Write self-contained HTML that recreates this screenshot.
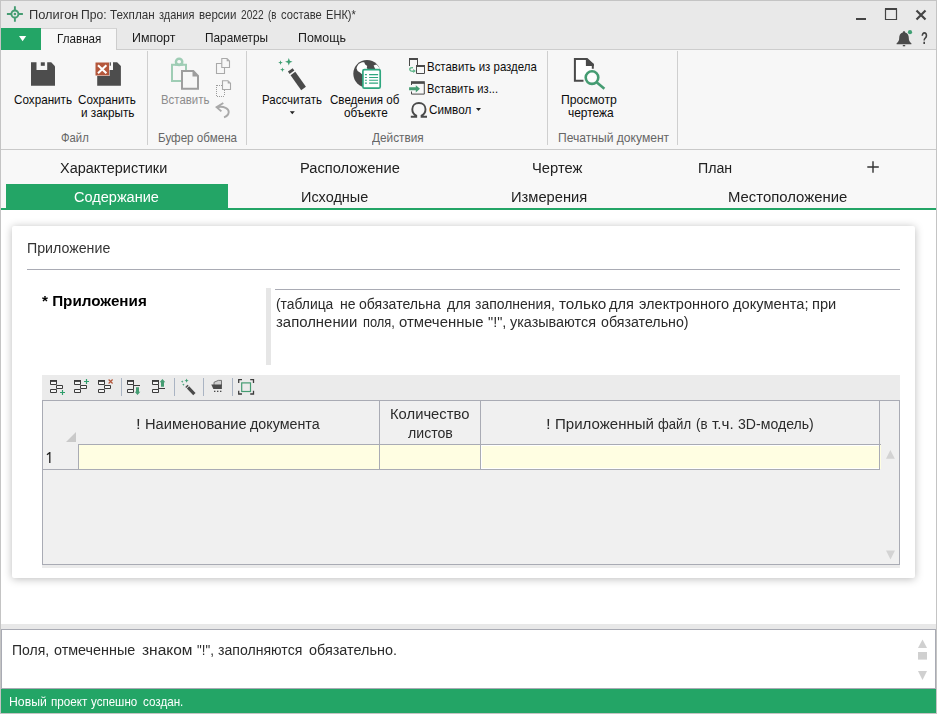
<!DOCTYPE html>
<html lang="ru"><head><meta charset="utf-8"><title>Полигон Про</title>
<style>
html,body{margin:0;padding:0;}
body{width:937px;height:714px;overflow:hidden;background:#fff;font-family:"Liberation Sans",sans-serif;position:relative;}
.b{position:absolute;box-sizing:border-box;}
.t{position:absolute;white-space:nowrap;transform-origin:0 0;display:block;}
svg{position:absolute;overflow:visible;}
.gs{position:absolute;left:0;top:0;width:937px;height:714px;will-change:transform;}
</style></head><body>
<!-- window frame -->
<div class="b" style="left:0;top:0;width:937px;height:714px;background:#c4c4c4;"></div>
<!-- title + tab strip -->
<div class="b" style="left:1px;top:1px;width:935px;height:48px;background:#e9e9e9;"></div>
<!-- ribbon body -->
<div class="b" style="left:1px;top:49px;width:935px;height:101px;background:#f7f7f7;border-top:1px solid #cdcdcd;border-bottom:1px solid #c9c9c9;"></div>
<!-- app button -->
<div class="b" style="left:1px;top:28px;width:40px;height:22px;background:#23a566;"></div>
<!-- active ribbon tab -->
<div class="b" style="left:41px;top:28px;width:76px;height:22px;background:#f7f7f7;border-top:1px solid #d4d4d4;border-right:1px solid #cdcdcd;"></div>
<!-- ribbon separators -->
<div class="b" style="left:147px;top:51px;width:1px;height:94px;background:#cfcfcf;"></div>
<div class="b" style="left:246px;top:51px;width:1px;height:94px;background:#cfcfcf;"></div>
<div class="b" style="left:547px;top:51px;width:1px;height:94px;background:#cfcfcf;"></div>
<div class="b" style="left:677px;top:51px;width:1px;height:94px;background:#cfcfcf;"></div>
<!-- section tabs area -->
<div class="b" style="left:1px;top:150px;width:935px;height:58px;background:#f8f8f8;"></div>
<div class="b" style="left:6px;top:184px;width:222px;height:24px;background:#23a566;"></div>
<div class="b" style="left:1px;top:208px;width:935px;height:2px;background:#23a566;"></div>
<!-- content area -->
<div class="b" style="left:1px;top:210px;width:935px;height:414px;background:#fff;"></div>
<!-- card -->
<div class="b" style="left:12px;top:226px;width:903px;height:352px;background:#fff;border-radius:2px;box-shadow:0 1px 8px rgba(0,0,0,0.27);"></div>
<div class="b" style="left:27px;top:269px;width:873px;height:1px;background:#a9abb4;"></div>
<!-- splitter + description -->
<div class="b" style="left:266px;top:288px;width:5px;height:77px;background:#e6e6e6;"></div>
<div class="b" style="left:275px;top:289px;width:625px;height:1px;background:#a9abb4;"></div>
<!-- table container -->
<div class="b" style="left:42px;top:375px;width:858px;height:193px;background:#ebebeb;"></div>
<div class="b" style="left:42px;top:400px;width:858px;height:165px;background:#f0f0f0;border:1px solid #a9abb4;"></div>
<!-- header bottom line -->
<div class="b" style="left:78px;top:444px;width:802px;height:1px;background:#a9abb4;"></div>
<!-- data row cells -->
<div class="b" style="left:78px;top:444px;width:802px;height:26px;background:#fffee2;border:1px solid #a9abb4;"></div>
<div class="b" style="left:43px;top:469px;width:36px;height:1px;background:#a9abb4;"></div>
<!-- focused cell inner white frame -->
<div class="b" style="left:481px;top:445px;width:398px;height:24px;border:1px solid #fff;border-right:none;"></div>
<div class="b" style="left:880px;top:445px;width:1px;height:24px;background:#fffee2;"></div>
<div class="b" style="left:879px;top:444px;width:2px;height:1px;background:#a9abb4;"></div>
<!-- column separators -->
<div class="b" style="left:379px;top:401px;width:1px;height:68px;background:#a9abb4;"></div>
<div class="b" style="left:480px;top:401px;width:1px;height:68px;background:#a9abb4;"></div>
<div class="b" style="left:879px;top:401px;width:1px;height:68px;background:#a9abb4;"></div>
<!-- bottom splitter -->
<div class="b" style="left:1px;top:624px;width:935px;height:5px;background:#e8e8e8;"></div>
<!-- info box -->
<div class="b" style="left:1px;top:629px;width:935px;height:60px;background:#fff;border:1px solid #a9abb4;"></div>
<!-- status bar -->
<div class="b" style="left:1px;top:689px;width:935px;height:24px;background:#23a566;"></div>

<svg width="937" height="714" viewBox="0 0 937 714" style="left:0;top:0;">
<!-- title crosshair -->
<g stroke="#459c72" fill="none" stroke-width="1.9">
<circle cx="14.9" cy="14" r="3.5"/>
<path d="M14.9 6.2V10.5M14.9 17.5V21.8M6.9 14H11.4M18.4 14H22.9"/>
</g>
<circle cx="14.9" cy="14" r="1.3" fill="#459c72"/>
<!-- app button arrow -->
<path d="M19 36H26.2L22.6 41.2Z" fill="#fff"/>
<!-- window controls -->
<rect x="856" y="18" width="10" height="2" fill="#444"/>
<path d="M885.5 9H896.5V19.5H885.5Z" fill="none" stroke="#444" stroke-width="1.2"/>
<rect x="885" y="8" width="12" height="2" fill="#444"/>
<path d="M916.5 10.5L925.5 19.5M925.5 10.5L916.5 19.5" stroke="#444" stroke-width="2.2" fill="none"/>
<!-- bell -->
<path d="M904 31.2c-.9 0-1.2.5-1.2 1.2c-2.6.7-3.6 3-3.6 5.600c0 2.500-.8 3.800-2.600 5.300v1h14.800v-1c-1.800-1.500-2.600-2.800-2.600-5.300c0-2.600-1-4.900-3.600-5.600c0-.7-.3-1.200-1.200-1.200z" fill="#4a4a4a"/>
<rect x="902.8" y="45" width="2.400" height="1.300" fill="#4a4a4a"/>
<circle cx="910" cy="32.200" r="2.100" fill="#3f9f73"/>

<!-- SAVE icon -->
<path d="M31 62.300H51.200L55 66.200V85.800H31Z" fill="#4d4d4d"/>
<rect x="36.500" y="62" width="10.700" height="8" fill="#f7f7f7"/>
<rect x="40.800" y="62.300" width="4" height="3.500" fill="#4d4d4d"/>
<!-- SAVE & CLOSE icon -->
<path d="M97.200 62.300H117.100L120.900 66.100V85.800H97.200Z" fill="#4d4d4d"/>
<rect x="102" y="62" width="11" height="8" fill="#f7f7f7"/>
<rect x="109.300" y="62.300" width="1.600" height="3.400" fill="#4d4d4d"/>
<rect x="95" y="62" width="14.600" height="14" fill="#f7f7f7"/>
<rect x="95.500" y="62.500" width="13.600" height="13" fill="#b4573b"/>
<path d="M98 65.200L106.400 73.200M106.400 65.200L98 73.200" stroke="#fff" stroke-width="2.100" fill="none"/>

<!-- PASTE icon -->
<g fill="none" stroke="#9fcdb5" stroke-width="2">
<path d="M172 64.800H186V80.900H172Z"/>
</g>
<circle cx="179.100" cy="61.800" r="3.100" fill="none" stroke="#9fcdb5" stroke-width="2.600"/>
<rect x="175" y="63" width="8.200" height="2.700" fill="#9fcdb5"/>
<circle cx="179.100" cy="61.800" r="1.600" fill="#f7f7f7"/>
<path d="M182 71.100H193.300L198 76V88.700H182Z" fill="#f7f7f7" stroke="#9e9e9e" stroke-width="2"/>
<path d="M192.500 70.600V76.600H198.600Z" fill="#9e9e9e"/>
<!-- copy small -->
<g fill="#f7f7f7" stroke="#a9a9a9" stroke-width="1.100">
<path d="M216.500 63.500H224.500V73.500H216.500Z"/>
<path d="M221.800 58.500H227L229.500 61V67.500H221.800Z"/>
</g>
<path d="M226.700 58.500V61.300H229.500Z" fill="#a9a9a9"/>
<!-- cut small -->
<path d="M216.500 85H224.500M216.500 96H224.500M216.500 85V96M224.500 90V96" fill="none" stroke="#9c9c9c" stroke-width="1" stroke-dasharray="1 1" shape-rendering="crispEdges"/>
<path d="M222.500 80.700H228L230.500 83.200V89.500H222.500Z" fill="#f7f7f7" stroke="#a9a9a9" stroke-width="1.100"/>
<path d="M227.700 80.700V83.500H230.500Z" fill="#a9a9a9"/>
<!-- undo -->
<path d="M223.300 103L216.600 107.200L221.400 111.400" fill="none" stroke="#a9a9a9" stroke-width="1.900"/>
<path d="M217 107.200C224 105.800 229 108.500 228.700 112.200C228.500 115 226.500 116.500 224 117.300" fill="none" stroke="#a9a9a9" stroke-width="1.900"/>

<!-- WAND big -->
<g fill="#3f9f73">
<path d="M288.800 58.100L289.800 60.800L292.500 61.800L289.800 62.800L288.800 65.500L287.800 62.800L285.100 61.800L287.800 60.800Z"/>
<path d="M280.500 60.300L281.100 62L282.800 62.600L281.100 63.200L280.500 64.900L279.900 63.200L278.200 62.600L279.900 62Z"/>
<path d="M282.400 67.400L283 69.100L284.700 69.700L283 70.300L282.400 72L281.800 70.300L280.100 69.700L281.800 69.100Z"/>
</g>
<g transform="translate(290.300 69.850) rotate(54.600)" fill="#4a4a4a">
<rect x="0" y="-2.900" width="2.900" height="5.800"/>
<rect x="4.500" y="-2.900" width="18.400" height="5.800"/>
</g>
<!-- dropdown arrows -->
<path d="M289.800 111.300H294.800L292.300 114.300Z" fill="#222"/>
<path d="M476 108H481L478.500 111Z" fill="#222"/>

<!-- GLOBE + doc -->
<circle cx="367" cy="73.700" r="13.700" fill="#4a4a4a"/>
<path d="M356.500 68.300C357 66 358 64.500 359.500 63.500C361 62.500 363 62 364.200 62.300L365.200 64.500L367.200 66L366.800 67.500L367.600 69.500L364 72L362.300 74.500L360 72.500L357.600 71Z" fill="#fff"/>
<path d="M373.600 65.400L376.300 64.600C378 66 379.300 67.500 380 69.500H375.500Z" fill="#fff"/>
<rect x="362.900" y="69.600" width="17.300" height="18.600" rx="1.500" fill="#fff" stroke="#2fa77f" stroke-width="1.700"/>
<g stroke="#2fa77f" stroke-width="1.100">
<path d="M364.900 74.600H366.900M369.100 74.600H378.100M364.900 77.500H366.900M369.100 77.500H378.100M364.900 80.300H366.900M369.100 80.300H378.100M364.900 83.100H366.900M369.100 83.100H378.100"/>
</g>

<!-- Insert from section icon -->
<g fill="none" stroke="#4a4a4a" stroke-width="1">
<path d="M409.500 66V59.500H417.500V65"/>
<path d="M416.500 66.500H424.500V73.500H416.500Z" fill="#f7f7f7"/>
</g>
<rect x="409" y="58" width="9" height="2" fill="#4a4a4a"/>
<rect x="416" y="65" width="9" height="2" fill="#4a4a4a"/>
<path d="M413 67.700C410.500 67.200 409.300 68.600 409.900 70C410.500 71.400 412 71.400 413.800 71.200" fill="none" stroke="#5fb58a" stroke-width="1.400"/>
<path d="M413.200 68.900L416 71.100L413.200 73.100Z" fill="#5fb58a"/>
<!-- Insert from... icon -->
<path d="M411.500 85V83H424.300V94.100H411.500V91.500" fill="none" stroke="#4a4a4a" stroke-width="1"/>
<rect x="411" y="81.200" width="13.800" height="2.500" fill="#4a4a4a"/>
<path d="M409.100 87.300H415.800V85.200L420 88.800L415.800 92.400V90.300H409.100Z" fill="#459c72"/>
<!-- Omega -->
<path d="M410.800 116.800H416.200V115.600C413.700 114.300 412.300 112 412.300 109.200C412.300 105.500 415.200 103 418.900 103C422.600 103 425.500 105.500 425.500 109.200C425.500 112 424.100 114.300 421.600 115.600V116.800H427" fill="none" stroke="#4a4a4a" stroke-width="1.900"/>

<!-- PRINT PREVIEW icon -->
<path d="M583.500 80.800H574.900V58.900H587L592.800 64.500V68.800" fill="#fff" stroke="#4a4a4a" stroke-width="2"/>
<path d="M585.900 58.500V66.100H593.800V64Z" fill="#4a4a4a"/>
<circle cx="592" cy="77.600" r="6.300" fill="#fdfdfd" stroke="#459c72" stroke-width="2.600"/>
<path d="M596.600 82.200L604.400 88.800" stroke="#459c72" stroke-width="2.600" fill="none"/>

<!-- section "+" -->
<path d="M867.300 167H878.800M873 161.300V172.700" stroke="#333" stroke-width="1.400" fill="none"/>
<!-- table toolbar -->
<g transform="translate(0 0)">
<g fill="#f4f4f4" stroke="#3c3c3c" stroke-width="1">
<path d="M50.500 381H56.500V384.500H50.500Z"/>
<path d="M56.500 385.500H62.500V388.500H56.500Z"/>
<path d="M50.500 389.500H56.500V392.500H50.500Z"/>
</g>
<rect x="50" y="380" width="7" height="1.800" fill="#3c3c3c"/>
</g>
<path d="M60 392.500H65M62.500 390V395" stroke="#2e9e6b" stroke-width="1.150" fill="none"/>
<g transform="translate(24 0)">
<g fill="#f4f4f4" stroke="#3c3c3c" stroke-width="1">
<path d="M50.500 381H56.500V384.500H50.500Z"/>
<path d="M56.500 385.500H62.500V388.500H56.500Z"/>
<path d="M50.500 389.500H56.500V392.500H50.500Z"/>
</g>
<rect x="50" y="380" width="7" height="1.800" fill="#3c3c3c"/>
</g>
<path d="M84 381.500H89M86.500 379V384" stroke="#2e9e6b" stroke-width="1.150" fill="none"/>
<g transform="translate(48 0)">
<g fill="#f4f4f4" stroke="#3c3c3c" stroke-width="1">
<path d="M50.500 381H56.500V384.500H50.500Z"/>
<path d="M56.500 385.500H62.500V388.500H56.500Z"/>
<path d="M50.500 389.500H56.500V392.500H50.500Z"/>
</g>
<rect x="50" y="380" width="7" height="1.800" fill="#3c3c3c"/>
</g>
<path d="M108.600 379.500L112.600 383.500M112.600 379.500L108.600 383.500" stroke="#b4573b" stroke-width="1.200" fill="none"/>
<rect x="121" y="378" width="1" height="18" fill="#aab4c3"/>
<rect x="174" y="378" width="1" height="18" fill="#aab4c3"/>
<rect x="203" y="378" width="1" height="18" fill="#aab4c3"/>
<rect x="232" y="378" width="1" height="18" fill="#aab4c3"/>
<g fill="#f4f4f4" stroke="#3c3c3c" stroke-width="1">
<path d="M127.500 381H133.500V384.500H127.500Z"/>
<path d="M127.500 389.500H133.500V392.500H127.500Z"/>
<path d="M133.500 384.500V389.500M133.500 385.500H140" fill="none"/>
</g>
<rect x="127" y="380" width="7" height="1.800" fill="#3c3c3c"/>
<path d="M136 387.200H139V391.800H140.300L137.500 395L134.700 391.800H136Z" fill="#459c72"/>
<g fill="#f4f4f4" stroke="#3c3c3c" stroke-width="1">
<path d="M152.500 381H158.500V384.500H152.500Z"/>
<path d="M152.500 389.500H158.500V392.500H152.500Z"/>
<path d="M158.500 384.500V389.500M158.500 388.500H165" fill="none"/>
</g>
<rect x="152" y="380" width="7" height="1.800" fill="#3c3c3c"/>
<path d="M162.400 379L165.300 382.200H164V386.800H161V382.200H159.600Z" fill="#459c72"/>
<g fill="#3f9f73">
<path d="M186.600 378.600L187.200 380.100L188.700 380.700L187.200 381.300L186.600 382.800L186 381.300L184.500 380.700L186 380.100Z"/>
<path d="M182.200 380.300L182.600 381.200L183.500 381.600L182.600 382L182.200 382.900L181.800 382L180.900 381.600L181.800 381.200Z"/>
<path d="M183.400 383.400L183.800 384.300L184.700 384.700L183.800 385.100L183.400 386L183 385.100L182.100 384.700L183 384.300Z"/>
</g>
<g transform="translate(186.400 385.800) rotate(46)" fill="#4a4a4a">
<rect x="0" y="-1.600" width="1.500" height="3.200"/>
<rect x="2.300" y="-1.600" width="9.200" height="3.200"/>
</g>
<path d="M214 385V382.300L218.300 380.400H221.500V385.500" fill="#d0d0d0" stroke="#6a6a6a" stroke-width="0.900"/>
<path d="M211.300 384.500H221.900V389H213.300Z" fill="#4a4a4a"/>
<rect x="214" y="390.700" width="1.400" height="1.300" fill="#4a4a4a"/>
<rect x="217" y="390.700" width="1.400" height="1.300" fill="#4a4a4a"/>
<rect x="220" y="390.700" width="1.400" height="1.300" fill="#4a4a4a"/>
<path d="M238.700 383V379.700H242M250.200 379.700H253.500V383M253.500 390.700V394H250.200M242 394H238.700V390.700" fill="none" stroke="#3c3c3c" stroke-width="1.300"/>
<rect x="241.700" y="382.900" width="8.800" height="8.600" fill="none" stroke="#459c72" stroke-width="1.200"/>
<path d="M76 432V442H66Z" fill="#c9c9c9"/>
<path d="M890.400 450L894.800 458.700H886Z" fill="#d3d3d3"/>
<path d="M886 550.600H895L890.500 559.600Z" fill="#d3d3d3"/>
<path d="M922.500 639.500L927 648H918Z" fill="#d0d0d0"/>
<rect x="918" y="652" width="9" height="7.600" fill="#d0d0d0"/>
<path d="M918 671H927L922.500 680Z" fill="#d0d0d0"/>
<!-- row number 1 -->
<path d="M46.600 454.200L49.400 452H50.450V463H49.150V453.900L47.200 455.250Z" fill="#222"/>
</svg>

<span class="t" style="left:14.40px;top:92.10px;font-size:12.4px;line-height:16px;color:#0c0c0c;transform:scaleX(0.9425);">Сохранить</span>
<span class="t" style="left:78.20px;top:92.10px;font-size:12.4px;line-height:16px;color:#0c0c0c;transform:scaleX(0.9408);">Сохранить</span>
<span class="t" style="left:80.50px;top:104.90px;font-size:12.4px;line-height:16px;color:#0c0c0c;transform:scaleX(0.9493);">и закрыть</span>
<span class="t" style="left:61.00px;top:130.40px;font-size:12.4px;line-height:16px;color:#666;transform:scaleX(0.9096);">Файл</span>
<span class="t" style="left:160.88px;top:92.10px;font-size:12.4px;line-height:16px;color:#8c8c8c;transform:scaleX(0.9204);">Вставить</span>
<span class="t" style="left:157.66px;top:130.40px;font-size:12.4px;line-height:16px;color:#666;transform:scaleX(0.9388);">Буфер обмена</span>
<span class="t" style="left:261.87px;top:92.10px;font-size:12.4px;line-height:16px;color:#0c0c0c;transform:scaleX(0.9272);">Рассчитать</span>
<span class="t" style="left:330.20px;top:92.10px;font-size:12.4px;line-height:16px;color:#0c0c0c;transform:scaleX(0.9359);">Сведения об</span>
<span class="t" style="left:343.60px;top:104.90px;font-size:12.4px;line-height:16px;color:#0c0c0c;transform:scaleX(0.9480);">объекте</span>
<span class="t" style="left:427.08px;top:59.40px;font-size:12.4px;line-height:16px;color:#0c0c0c;transform:scaleX(0.9237);">Вставить из раздела</span>
<span class="t" style="left:427.10px;top:80.70px;font-size:12.4px;line-height:16px;color:#0c0c0c;transform:scaleX(0.8999);">Вставить из...</span>
<span class="t" style="left:429.40px;top:102.00px;font-size:12.4px;line-height:16px;color:#0c0c0c;transform:scaleX(0.9449);">Символ</span>
<span class="t" style="left:372.00px;top:130.40px;font-size:12.4px;line-height:16px;color:#666;transform:scaleX(0.9519);">Действия</span>
<span class="t" style="left:560.61px;top:92.10px;font-size:12.4px;line-height:16px;color:#0c0c0c;transform:scaleX(0.9857);">Просмотр</span>
<span class="t" style="left:567.50px;top:104.90px;font-size:12.4px;line-height:16px;color:#0c0c0c;transform:scaleX(0.9634);">чертежа</span>
<span class="t" style="left:557.82px;top:130.40px;font-size:12.4px;line-height:16px;color:#666;transform:scaleX(0.9758);">Печатный документ</span>
<div class="gs">
<span class="t" style="left:29.06px;top:7.40px;font-size:12.4px;line-height:16px;color:#333;transform:scaleX(1.0368);">Полигон</span>
<span class="t" style="left:81.12px;top:7.40px;font-size:12.4px;line-height:16px;color:#333;transform:scaleX(0.9802);">Про:</span>
<span class="t" style="left:110.30px;top:7.40px;font-size:12.4px;line-height:16px;color:#333;transform:scaleX(0.9437);">Техплан</span>
<span class="t" style="left:158.90px;top:7.40px;font-size:12.4px;line-height:16px;color:#333;transform:scaleX(0.8856);">здания</span>
<span class="t" style="left:198.70px;top:7.40px;font-size:12.4px;line-height:16px;color:#333;transform:scaleX(0.9320);">версии</span>
<span class="t" style="left:240.80px;top:7.40px;font-size:12.4px;line-height:16px;color:#333;transform:scaleX(0.8203);">2022</span>
<span class="t" style="left:268.00px;top:7.40px;font-size:12.4px;line-height:16px;color:#333;transform:scaleX(0.7819);">(в</span>
<span class="t" style="left:280.70px;top:7.40px;font-size:12.4px;line-height:16px;color:#333;transform:scaleX(0.9008);">составе</span>
<span class="t" style="left:325.51px;top:7.40px;font-size:12.4px;line-height:16px;color:#333;transform:scaleX(0.8938);">ЕНК)*</span>
<span class="t" style="left:57.06px;top:30.90px;font-size:12.4px;line-height:16px;color:#1a1a1a;transform:scaleX(0.9417);">Главная</span>
<span class="t" style="left:131.90px;top:30.40px;font-size:12.4px;line-height:16px;color:#1a1a1a;transform:scaleX(1.0013);">Импорт</span>
<span class="t" style="left:204.65px;top:30.40px;font-size:12.4px;line-height:16px;color:#1a1a1a;transform:scaleX(0.9548);">Параметры</span>
<span class="t" style="left:297.50px;top:30.40px;font-size:12.4px;line-height:16px;color:#1a1a1a;transform:scaleX(1.0021);">Помощь</span>
<span class="t" style="left:60.20px;top:157.73px;font-size:15.2px;line-height:19px;color:#222;transform:scaleX(0.9525);">Характеристики</span>
<span class="t" style="left:299.53px;top:157.73px;font-size:15.2px;line-height:19px;color:#222;transform:scaleX(0.9667);">Расположение</span>
<span class="t" style="left:531.73px;top:157.73px;font-size:15.2px;line-height:19px;color:#222;transform:scaleX(0.9721);">Чертеж</span>
<span class="t" style="left:697.77px;top:157.73px;font-size:15.2px;line-height:19px;color:#222;transform:scaleX(0.9340);">План</span>
<span class="t" style="left:74.30px;top:187.43px;font-size:15.2px;line-height:19px;color:#fff;transform:scaleX(0.9568);">Содержание</span>
<span class="t" style="left:301.25px;top:187.43px;font-size:15.2px;line-height:19px;color:#222;transform:scaleX(0.9522);">Исходные</span>
<span class="t" style="left:510.63px;top:187.43px;font-size:15.2px;line-height:19px;color:#222;transform:scaleX(0.9686);">Измерения</span>
<span class="t" style="left:728.42px;top:187.43px;font-size:15.2px;line-height:19px;color:#222;transform:scaleX(0.9807);">Местоположение</span>
<span class="t" style="left:26.50px;top:238.88px;font-size:14.2px;line-height:18px;color:#333;transform:scaleX(1.0009);">Приложение</span>
<span class="t" style="left:42.10px;top:291.23px;font-size:15.2px;line-height:19px;color:#000;transform:scaleX(1.0019);font-weight:bold;">* Приложения</span>
<span class="t" style="left:276.20px;top:293.63px;font-size:15.2px;line-height:19px;color:#2b2b2b;transform:scaleX(0.9124);">(таблица</span>
<span class="t" style="left:340.28px;top:293.63px;font-size:15.2px;line-height:19px;color:#2b2b2b;transform:scaleX(0.9228);">не</span>
<span class="t" style="left:359.20px;top:293.63px;font-size:15.2px;line-height:19px;color:#2b2b2b;transform:scaleX(0.9258);">обязательна</span>
<span class="t" style="left:447.10px;top:293.63px;font-size:15.2px;line-height:19px;color:#2b2b2b;transform:scaleX(0.9174);">для</span>
<span class="t" style="left:474.80px;top:293.63px;font-size:15.2px;line-height:19px;color:#2b2b2b;transform:scaleX(0.9201);">заполнения,</span>
<span class="t" style="left:559.30px;top:293.63px;font-size:15.2px;line-height:19px;color:#2b2b2b;transform:scaleX(1.0089);">только</span>
<span class="t" style="left:609.40px;top:293.63px;font-size:15.2px;line-height:19px;color:#2b2b2b;transform:scaleX(0.9563);">для</span>
<span class="t" style="left:638.80px;top:293.63px;font-size:15.2px;line-height:19px;color:#2b2b2b;transform:scaleX(0.9561);">электронного</span>
<span class="t" style="left:733.20px;top:293.63px;font-size:15.2px;line-height:19px;color:#2b2b2b;transform:scaleX(0.9643);">документа;</span>
<span class="t" style="left:812.34px;top:293.63px;font-size:15.2px;line-height:19px;color:#2b2b2b;transform:scaleX(0.9632);">при</span>
<span class="t" style="left:276.20px;top:312.43px;font-size:15.2px;line-height:19px;color:#2b2b2b;transform:scaleX(0.9816);">заполнении</span>
<span class="t" style="left:363.15px;top:312.43px;font-size:15.2px;line-height:19px;color:#2b2b2b;transform:scaleX(0.8469);">поля,</span>
<span class="t" style="left:399.30px;top:312.43px;font-size:15.2px;line-height:19px;color:#2b2b2b;transform:scaleX(0.9824);">отмеченные</span>
<span class="t" style="left:488.00px;top:312.43px;font-size:15.2px;line-height:19px;color:#2b2b2b;transform:scaleX(0.9554);">&quot;!&quot;,</span>
<span class="t" style="left:510.30px;top:312.43px;font-size:15.2px;line-height:19px;color:#2b2b2b;transform:scaleX(0.9469);">указываются</span>
<span class="t" style="left:600.90px;top:312.43px;font-size:15.2px;line-height:19px;color:#2b2b2b;transform:scaleX(0.9364);">обязательно)</span>
<span class="t" style="left:136.10px;top:413.93px;font-size:15.2px;line-height:19px;color:#2b2b2b;transform:scaleX(1.1000);">!</span>
<span class="t" style="left:144.63px;top:413.93px;font-size:15.2px;line-height:19px;color:#2b2b2b;transform:scaleX(0.9660);">Наименование</span>
<span class="t" style="left:250.10px;top:413.93px;font-size:15.2px;line-height:19px;color:#2b2b2b;transform:scaleX(0.9409);">документа</span>
<span class="t" style="left:390.03px;top:403.53px;font-size:15.2px;line-height:19px;color:#2b2b2b;transform:scaleX(0.9736);">Количество</span>
<span class="t" style="left:407.50px;top:422.83px;font-size:15.2px;line-height:19px;color:#2b2b2b;transform:scaleX(0.9300);">листов</span>
<span class="t" style="left:546.40px;top:413.93px;font-size:15.2px;line-height:19px;color:#2b2b2b;transform:scaleX(1.1000);">!</span>
<span class="t" style="left:554.51px;top:413.93px;font-size:15.2px;line-height:19px;color:#2b2b2b;transform:scaleX(0.9903);">Приложенный</span>
<span class="t" style="left:658.00px;top:413.93px;font-size:15.2px;line-height:19px;color:#2b2b2b;transform:scaleX(0.8630);">файл</span>
<span class="t" style="left:696.00px;top:413.93px;font-size:15.2px;line-height:19px;color:#2b2b2b;transform:scaleX(0.8731);">(в</span>
<span class="t" style="left:711.80px;top:413.93px;font-size:15.2px;line-height:19px;color:#2b2b2b;transform:scaleX(0.9998);">т.ч.</span>
<span class="t" style="left:737.80px;top:413.93px;font-size:15.2px;line-height:19px;color:#2b2b2b;transform:scaleX(0.9276);">3D-модель)</span>
<span class="t" style="left:921.20px;top:28.08px;font-size:16.5px;line-height:21px;color:#444;transform:scaleX(0.6800);font-weight:bold;">?</span>
<span class="t" style="left:12.38px;top:640.23px;font-size:15.2px;line-height:19px;color:#2b2b2b;transform:scaleX(0.9209);">Поля,</span>
<span class="t" style="left:54.40px;top:640.23px;font-size:15.2px;line-height:19px;color:#2b2b2b;transform:scaleX(0.9450);">отмеченные</span>
<span class="t" style="left:141.60px;top:640.23px;font-size:15.2px;line-height:19px;color:#2b2b2b;transform:scaleX(1.0192);">знаком</span>
<span class="t" style="left:197.10px;top:640.23px;font-size:15.2px;line-height:19px;color:#2b2b2b;transform:scaleX(0.8777);">&quot;!&quot;,</span>
<span class="t" style="left:218.40px;top:640.23px;font-size:15.2px;line-height:19px;color:#2b2b2b;transform:scaleX(0.9277);">заполняются</span>
<span class="t" style="left:309.00px;top:640.23px;font-size:15.2px;line-height:19px;color:#2b2b2b;transform:scaleX(0.9492);">обязательно.</span>
<span class="t" style="left:8.61px;top:694.20px;font-size:12.4px;line-height:16px;color:#fff;transform:scaleX(0.9885);">Новый</span>
<span class="t" style="left:50.80px;top:694.20px;font-size:12.4px;line-height:16px;color:#fff;transform:scaleX(0.9424);">проект</span>
<span class="t" style="left:91.40px;top:694.20px;font-size:12.4px;line-height:16px;color:#fff;transform:scaleX(0.9328);">успешно</span>
<span class="t" style="left:142.60px;top:694.20px;font-size:12.4px;line-height:16px;color:#fff;transform:scaleX(0.9397);">создан.</span>
</div>
</body></html>
